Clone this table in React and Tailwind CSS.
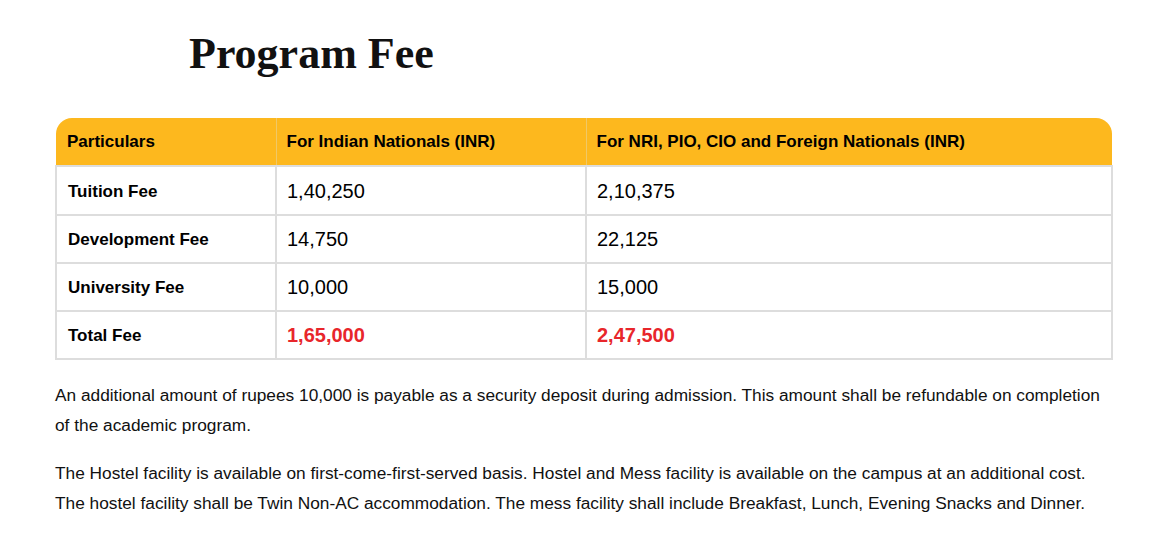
const rows = [
  { label: 'Tuition Fee', inr: '1,40,250', nri: '2,10,375', h: 'h-[49px]' },
  { label: 'Development Fee', inr: '14,750', nri: '22,125', h: 'h-[48px]' },
  { label: 'University Fee', inr: '10,000', nri: '15,000', h: 'h-[48px]' },
];

export default function App() {
  return (
    <div className="min-h-screen bg-white pl-[55px] pr-[40px] pt-[28px] text-black" style={{ fontFamily: '"Liberation Sans", Arial, sans-serif' }}>
      <h1
        className="pl-[134px] text-[44px] font-bold leading-[52px] text-[#111]"
        style={{ fontFamily: '"Liberation Serif", "Times New Roman", serif' }}
      >
        Program Fee
      </h1>

      <table className="mt-[38px] w-[1058px] border-collapse text-left">
        <thead>
          <tr className="bg-[#fdb81e] text-[17px] font-bold">
            <th className="h-[48px] w-[220px] rounded-tl-[16px] pl-[11px]">Particulars</th>
            <th className="w-[310px] border-l border-[#f0c866] pl-[10px]">For Indian Nationals (INR)</th>
            <th className="rounded-tr-[16px] border-l border-[#f0c866] pl-[10px]">For NRI, PIO, CIO and Foreign Nationals (INR)</th>
          </tr>
        </thead>
        <tbody>
          {rows.map((r) => (
            <tr key={r.label} className={r.h}>
              <td className="border-2 border-[#dddddd] pl-[11px] pt-[2px] text-[17px] font-bold">{r.label}</td>
              <td className="border-2 border-[#dddddd] pl-[10px] text-[20px]">{r.inr}</td>
              <td className="border-2 border-[#dddddd] pl-[10px] text-[20px]">{r.nri}</td>
            </tr>
          ))}
          <tr className="h-[48px]">
            <td className="border-2 border-[#dddddd] pl-[11px] pt-[2px] text-[17px] font-bold">Total Fee</td>
            <td className="border-2 border-[#dddddd] pl-[10px] text-[20px] font-bold text-[#e8262b]">1,65,000</td>
            <td className="border-2 border-[#dddddd] pl-[10px] text-[20px] font-bold text-[#e8262b]">2,47,500</td>
          </tr>
        </tbody>
      </table>

      <div className="mt-[20px] flex flex-col gap-[18px] text-[17.3px] leading-[30px] text-[#111]">
        <p>
          An additional amount of rupees 10,000 is payable as a security deposit during admission. This amount shall be refundable on completion of the academic program.
        </p>
        <p>
          The Hostel facility is available on first-come-first-served basis. Hostel and Mess facility is available on the campus at an additional cost. The hostel facility shall be Twin Non-AC accommodation. The mess facility shall include Breakfast, Lunch, Evening Snacks and Dinner.
        </p>
      </div>
    </div>
  );
}
